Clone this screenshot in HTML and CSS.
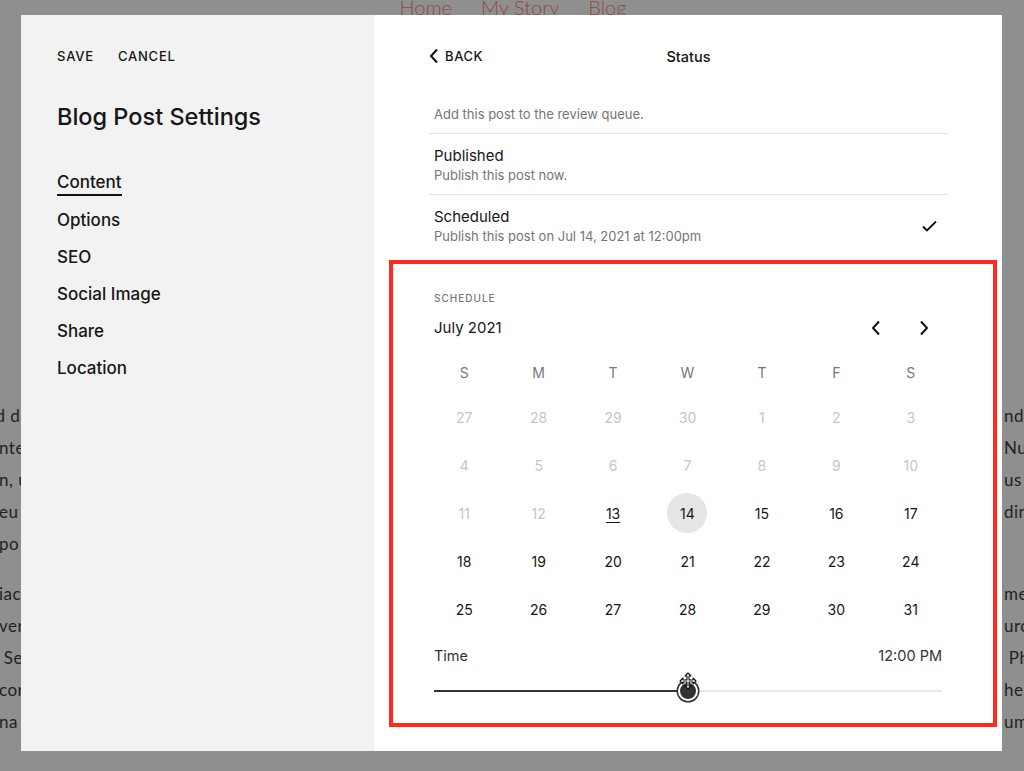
FILE: index.html
```html
<!DOCTYPE html>
<html>
	<head>
		<meta charset="utf-8" />
		<title>Blog Post Settings</title>
		<link rel="stylesheet" href="styles.css">
	</head>
	<body>

		<!-- page behind the dialog -->
		<div class="site">
			<div class="site-nav">
				<a href="javascript:;">Home</a>
				<a href="javascript:;">My Story</a>
				<a href="javascript:;">Blog</a>
			</div>
			<div class="site-text">
				<div class="para">
					<div class="line"><span class="l1">ed do</span><span class="r">nd</span></div>
					<div class="line"><span class="l2">nte</span><span class="r">Nul</span></div>
					<div class="line"><span class="l2">n, u</span><span class="r">us</span></div>
					<div class="line"><span class="l2">eu</span><span class="r">din</span></div>
					<div class="line"><span class="l2">po</span><span class="r"></span></div>
				</div>
				<div class="para">
					<div class="line"><span class="l2">iac</span><span class="r">me</span></div>
					<div class="line"><span class="l2">ver</span><span class="r">urc</span></div>
					<div class="line"><span class="l2">&nbsp;Se</span><span class="r">&nbsp;Ph</span></div>
					<div class="line"><span class="l2">con</span><span class="r">her</span></div>
					<div class="line"><span class="l2">na</span><span class="r">um</span></div>
				</div>
			</div>
		</div>

		<div class="dialog">
			<div class="side">
				<div class="actions">
					<a href="javascript:;">Save</a>
					<a href="javascript:;">Cancel</a>
				</div>
				<h1>Blog Post Settings</h1>
				<ul class="menu">
					<li class="on">Content</li>
					<li>Options</li>
					<li>SEO</li>
					<li>Social Image</li>
					<li>Share</li>
					<li>Location</li>
				</ul>
			</div>

			<div class="main">
				<div class="top">
					<a href="javascript:;" class="back">
						<svg width="10" height="16" viewBox="0 0 10 16"><path d="M8 1.5L2 8l6 6.5" fill="none" stroke="#111" stroke-width="2"/></svg>
						BACK
					</a>
					<div class="title">Status</div>
				</div>

				<div class="status-list">
					<div class="item first">
						<div>
							<div class="item-name">Needs Review</div>
							<div class="item-desc">Add this post to the review queue.</div>
						</div>
					</div>
					<div class="item">
						<div>
							<div class="item-name">Published</div>
							<div class="item-desc">Publish this post now.</div>
						</div>
					</div>
					<div class="item">
						<div>
							<div class="item-name">Scheduled</div>
							<div class="item-desc">Publish this post on Jul 14, 2021 at 12:00pm</div>
						</div>
						<svg class="check" width="15" height="12" viewBox="0 0 15 12"><path d="M1 6.5l4 4L14 1.5" fill="none" stroke="#111" stroke-width="1.8"/></svg>
					</div>
				</div>

				<div class="schedule">
					<div class="label">SCHEDULE</div>
					<div class="month">
						<span>July 2021</span>
						<div class="month-nav">
							<a href="javascript:;"><svg width="10" height="16" viewBox="0 0 10 16"><path d="M8 1.5L2 8l6 6.5" fill="none" stroke="#111" stroke-width="2"/></svg></a>
							<a href="javascript:;"><svg width="10" height="16" viewBox="0 0 10 16"><path d="M2 1.5L8 8l-6 6.5" fill="none" stroke="#111" stroke-width="2"/></svg></a>
						</div>
					</div>
					<div class="cal">
						<span class="wd">S</span><span class="wd">M</span><span class="wd">T</span><span class="wd">W</span><span class="wd">T</span><span class="wd">F</span><span class="wd">S</span>

						<span class="off">27</span><span class="off">28</span><span class="off">29</span><span class="off">30</span><span class="off">1</span><span class="off">2</span><span class="off">3</span>
						<span class="off">4</span><span class="off">5</span><span class="off">6</span><span class="off">7</span><span class="off">8</span><span class="off">9</span><span class="off">10</span>
						<span class="off">11</span><span class="off">12</span><span class="today">13</span><span><b class="sel">14</b></span><span>15</span><span>16</span><span>17</span>
						<span>18</span><span>19</span><span>20</span><span>21</span><span>22</span><span>23</span><span>24</span>
						<span>25</span><span>26</span><span>27</span><span>28</span><span>29</span><span>30</span><span>31</span>
					</div>
					<div class="time">
						<span>Time</span>
						<span>12:00 PM</span>
					</div>
					<div class="slider">
						<div class="track"><div class="fill" style="width:50%"></div></div>
						<div class="thumb" style="left:50%">
							<svg class="cursor" width="18" height="18" viewBox="0 0 18 18">
								<path d="M9 1l3 3h-2v4h4V6l3 3-3 3v-2h-4v4h2l-3 3-3-3h2v-4H4v2L1 9l3-3v2h4V4H6z" fill="#fff" stroke="#111" stroke-width="1.1" stroke-linejoin="round"/>
							</svg>
						</div>
					</div>
				</div>
			</div>
		</div>

	</body>
</html>
```

FILE: styles.css
```css
*{
	margin: 0;
	padding: 0;
	box-sizing: border-box;
}
a{
	color: inherit;
	text-decoration: none;
}
ul{
	list-style: none;
}
html, body{
	height: 100%;
}
body{
	background: #8f8f8f;
	font-family: Inter, "Noto Sans", sans-serif;
	color: #161616;
	overflow: hidden;
	position: relative;
}

/* page behind */
.site{
	font-family: Lato, "Open Sans", sans-serif;
}
.site-nav{
	display: flex;
	justify-content: center;
	gap: 29px;
	padding-left: 2px;
	margin-top: -5px;
	font-size: 20px;
	line-height: 24px;
	color: #8b4c45;
	font-weight: 300;
}
.site-text{
	margin-top: 381px;
	font-size: 17px;
	color: #222;
	letter-spacing: 0.5px;
}
.para{
	margin-bottom: 18px;
}
.line{
	display: flex;
	justify-content: space-between;
	line-height: 32px;
	width: 1064px;
}
.line .l1{
	margin-left: -14px;
}
.line .l2{
	margin-left: -1px;
}
.line .r{
	width: 60px;
}

/* dialog */
.dialog{
	position: absolute;
	top: 15px;
	left: 21px;
	width: 981px;
	height: 736px;
	display: flex;
	background: #fff;
}
.side{
	width: 353px;
	background: #f2f2f2;
	padding: 33px 0 0 36px;
}
.actions{
	display: flex;
	gap: 24px;
	font-size: 13px;
	font-weight: 500;
	letter-spacing: 0.8px;
	text-transform: uppercase;
	line-height: 16px;
}
.side h1{
	margin-top: 39px;
	font-size: 23.5px;
	font-weight: 500;
	line-height: 28px;
	letter-spacing: 0;
}
.menu{
	margin-top: 40px;
}
.menu li{
	font-size: 17px;
	font-weight: 500;
	line-height: 24px;
	margin-bottom: 13px;
}
.menu li.on{
	display: table;
	border-bottom: 2px solid #111;
	line-height: 23px;
	margin-bottom: 12px;
}

.main{
	flex: 1;
	padding: 0 54px 0 55px;
}
.top{
	height: 86px;
	display: flex;
	align-items: flex-start;
	position: relative;
	padding-top: 32px;
}
.back{
	display: flex;
	align-items: center;
	gap: 6px;
	font-size: 13px;
	font-weight: 500;
	letter-spacing: 0.6px;
	line-height: 18px;
}
.top .title{
	position: absolute;
	left: 0;
	right: 0;
	text-align: center;
	font-size: 14.5px;
	font-weight: 500;
	line-height: 18px;
	top: 33px;
}
.status-list{
	height: 154px;
	overflow: hidden;
}
.item{
	display: flex;
	justify-content: space-between;
	align-items: center;
	padding: 12px 11px 10px 5px;
	border-bottom: 1px solid #e3e3e3;
}
.item.first{
	margin-top: -28px;
}
.item-name{
	font-size: 15px;
	line-height: 20px;
}
.item-desc{
	font-size: 13px;
	line-height: 18px;
	color: #757575;
}

.schedule{
	margin: 5px -49px 0 -40px;
	border: 4px solid #ff2a1c;
	padding: 27px 51px 18px 41px;
}
.label{
	font-size: 10px;
	letter-spacing: 1px;
	font-weight: 500;
	line-height: 14px;
	color: #777;
}
.month{
	margin-top: 13px;
	display: flex;
	justify-content: space-between;
	align-items: center;
	font-size: 15px;
	line-height: 20px;
}
.month-nav{
	display: flex;
	gap: 24px;
	margin-right: 6px;
}
.month-nav a{
	width: 24px;
	height: 20px;
	display: flex;
	align-items: center;
	justify-content: center;
}
.cal{
	margin: 13px -6px 0 -7px;
	display: grid;
	grid-template-columns: repeat(7, 1fr);
	grid-auto-rows: 48px;
	grid-template-rows: 42px;
	font-size: 14px;
	font-weight: 400;
}
.cal span{
	display: flex;
	align-items: center;
	justify-content: center;
}
.cal .wd{
	color: #777;
	padding-top: 1px;
}
.cal .off{
	color: #c6c6c6;
}
.cal .today{
	text-decoration: underline;
	text-underline-offset: 3px;
}
.cal .sel{
	width: 40px;
	height: 40px;
	border-radius: 50%;
	background: #e6e6e6;
	display: flex;
	align-items: center;
	justify-content: center;
	font-weight: 400;
}
.time{
	margin-top: 13px;
	display: flex;
	justify-content: space-between;
	font-size: 14.5px;
	line-height: 20px;
	color: #333;
}
.slider{
	margin-top: 11px;
	height: 28px;
	position: relative;
	display: flex;
	align-items: center;
}
.track{
	width: 100%;
	height: 2px;
	background: #e8e8e8;
}
.fill{
	height: 2px;
	background: #333;
}
.thumb{
	position: absolute;
	top: 4px;
	width: 20px;
	height: 20px;
	margin-left: -10px;
	border-radius: 50%;
	background: #333;
	border: 2px solid #fff;
	box-shadow: 0 0 0 1.5px #333;
}
.cursor{
	position: absolute;
	left: -1px;
	top: -11px;
}
```
